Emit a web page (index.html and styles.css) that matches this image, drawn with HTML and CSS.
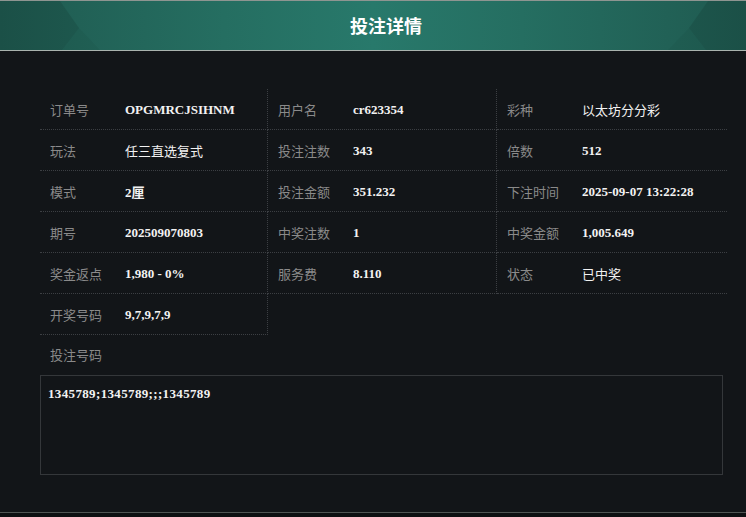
FILE: index.html
```html
<!DOCTYPE html>
<html>
<head lang="zh">
    <meta charset="UTF-8">
    <title>投注详情</title>
    <link rel="stylesheet" href="styles.css">
</head>
<body>
<div class="dialog">
    <div class="dialog_head">
        <svg class="deco deco_left" width="110" height="49" viewBox="0 0 110 49">
            <polygon points="0,0 60,0 79,27 62,49 0,49" fill="#000" fill-opacity="0.1"/>
            <polygon points="79,27 100,49 62,49" fill="#000" fill-opacity="0.04"/>
        </svg>
        <svg class="deco deco_right" width="110" height="49" viewBox="0 0 110 49">
            <polygon points="110,0 72,0 53,27 70,49 110,49" fill="#000" fill-opacity="0.1"/>
            <polygon points="53,27 32,49 70,49" fill="#000" fill-opacity="0.04"/>
        </svg>
        <span class="dialog_title">投注详情</span>
    </div>
    <div class="dialog_body">
        <div class="info">
            <div class="cell"><span class="lab">订单号</span><span class="val">OPGMRCJSIHNM</span></div>
            <div class="cell"><span class="lab">用户名</span><span class="val">cr623354</span></div>
            <div class="cell"><span class="lab">彩种</span><span class="val cn">以太坊分分彩</span></div>

            <div class="cell"><span class="lab">玩法</span><span class="val cn">任三直选复式</span></div>
            <div class="cell"><span class="lab">投注注数</span><span class="val">343</span></div>
            <div class="cell"><span class="lab">倍数</span><span class="val">512</span></div>

            <div class="cell"><span class="lab">模式</span><span class="val">2厘</span></div>
            <div class="cell"><span class="lab">投注金额</span><span class="val">351.232</span></div>
            <div class="cell"><span class="lab">下注时间</span><span class="val">2025-09-07 13:22:28</span></div>

            <div class="cell"><span class="lab">期号</span><span class="val">202509070803</span></div>
            <div class="cell"><span class="lab">中奖注数</span><span class="val">1</span></div>
            <div class="cell"><span class="lab">中奖金额</span><span class="val">1,005.649</span></div>

            <div class="cell"><span class="lab">奖金返点</span><span class="val">1,980 - 0%</span></div>
            <div class="cell"><span class="lab">服务费</span><span class="val">8.110</span></div>
            <div class="cell"><span class="lab">状态</span><span class="val cn">已中奖</span></div>

            <div class="cell"><span class="lab">开奖号码</span><span class="val">9,7,9,7,9</span></div>
        </div>
        <div class="code_lab">投注号码</div>
        <div class="code_box">1345789;1345789;;;1345789</div>
    </div>
</div>
</body>
</html>
```

FILE: styles.css
```css
body{
    margin: 0;
    background: #0d1012;
    font-family: "Noto Sans CJK SC", sans-serif;
    font-size: 13px;
}
.dialog{
    background: #121518;
    border-bottom: 1px solid #4f5553;
}
.dialog_head{
    position: relative;
    height: 49px;
    padding-left: 26px;
    border-top: 1px solid #8e9591;
    border-bottom: 1px solid #a9b3ae;
    background: linear-gradient(90deg, #1f5a50 0%, #256e61 30%, #28796b 50%, #256e61 70%, #1f5a50 100%);
    text-align: center;
    overflow: hidden;
}
.deco{
    position: absolute;
    top: 0;
}
.deco_left{
    left: 0;
}
.deco_right{
    right: 0;
}
.dialog_title{
    position: relative;
    line-height: 49px;
    font-size: 18px;
    font-weight: bold;
    color: #fff;
}
.dialog_body{
    padding: 38px 23px 37px 40px;
}
.info{
    display: grid;
    grid-template-columns: 228px 229px 230px;
}
.cell{
    display: flex;
    align-items: center;
    height: 40px;
    border-bottom: 1px dotted #3c3f43;
}
.cell:nth-child(3n+1),
.cell:nth-child(3n+2){
    border-right: 1px dotted #3c3f43;
}
.lab{
    width: 75px;
    padding-left: 10px;
    color: #8a8a8a;
}
.val{
    padding-top: 1px;
    font-family: "Liberation Serif", "Noto Sans CJK SC", serif;
    font-weight: bold;
    color: #f2f2f2;
}
.val.cn{
    padding-top: 0;
    font-family: "Noto Sans CJK SC", sans-serif;
    font-weight: normal;
}
.code_lab{
    height: 40px;
    line-height: 40px;
    padding-left: 10px;
    color: #8a8a8a;
}
.code_box{
    height: 80px;
    padding: 10px 7px 8px;
    border: 1px solid #34373a;
    font-family: "Liberation Serif", serif;
    font-weight: bold;
    font-size: 13px;
    letter-spacing: 0.35px;
    color: #f2f2f2;
}
```
